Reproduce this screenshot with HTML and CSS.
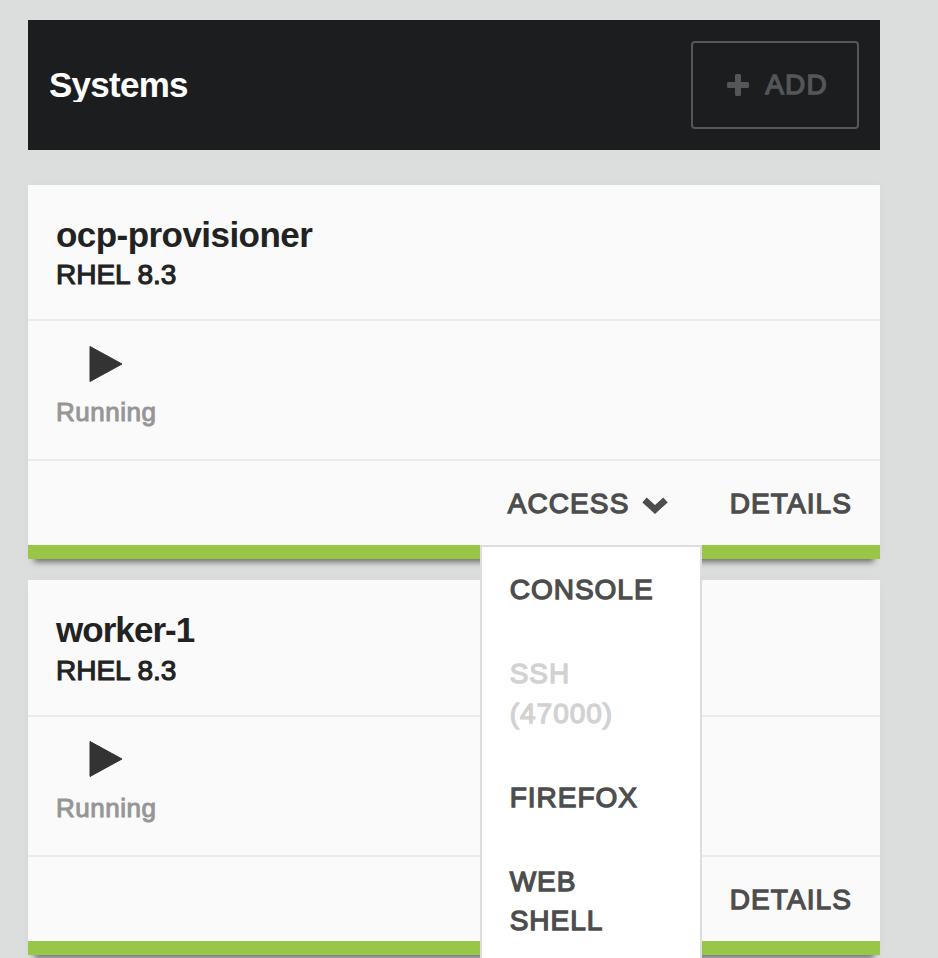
FILE: index.html
```html
<!DOCTYPE html>
<html lang="en">
<head>
<meta charset="utf-8">
<title>Systems</title>
<link rel="stylesheet" href="styles.css">
</head>
<body>
<main class="page">
  <header class="toolbar">
    <h1 class="toolbar-title">Systems</h1>
    <button class="add-button" disabled>
      <svg class="plus" viewBox="0 0 22 22"><path d="M9.500 0h3a1.500 1.500 0 0 1 1.500 1.500V8h6.500a1.500 1.500 0 0 1 1.500 1.500v3a1.500 1.500 0 0 1-1.500 1.500H14v6.500a1.500 1.500 0 0 1-1.500 1.500h-3A1.500 1.500 0 0 1 8 20.500V14H1.500A1.500 1.500 0 0 1 0 12.500v-3A1.500 1.500 0 0 1 1.500 8H8V1.500A1.500 1.500 0 0 1 9.500 0z"/></svg>
      <span>ADD</span>
    </button>
  </header>

  <section class="card">
    <div class="card-header">
      <h2 class="name">ocp-provisioner</h2>
      <p class="os">RHEL 8.3</p>
    </div>
    <div class="card-status">
      <svg class="play" viewBox="0 0 34 38"><path d="M1 1.500 33 19 1 36.500z"/></svg>
      <span class="state">Running</span>
    </div>
    <div class="card-actions">
      <div class="dropdown">
        <button class="action access">ACCESS
          <svg class="chevron" viewBox="0 0 26 18"><path d="M2.500 4 13 13.500 23.500 4"/></svg>
        </button>
        <ul class="menu">
          <li class="menu-item">CONSOLE</li>
          <li class="menu-item disabled">SSH (47000)</li>
          <li class="menu-item">FIREFOX</li>
          <li class="menu-item">WEB SHELL</li>
        </ul>
      </div>
      <button class="action">DETAILS</button>
    </div>
  </section>

  <section class="card card-second">
    <div class="card-header">
      <h2 class="name">worker-1</h2>
      <p class="os">RHEL 8.3</p>
    </div>
    <div class="card-status">
      <svg class="play" viewBox="0 0 34 38"><path d="M1 1.500 33 19 1 36.500z"/></svg>
      <span class="state">Running</span>
    </div>
    <div class="card-actions">
      <button class="action">DETAILS</button>
    </div>
  </section>
</main>
</body>
</html>
```
FILE: styles.css
```css
* { box-sizing: border-box; }
html, body { margin: 0; height: 100%; overflow: hidden; }
body {
  background: #dcdedd;
  font-family: "Liberation Sans", Arial, sans-serif;
  color: #222;
}
h1, h2, p, ul { margin: 0; padding: 0; font-weight: 400; }
button { font: inherit; background: none; border: 0; padding: 0; }

.page { height: 958px; overflow: hidden; padding: 20px 58px 0 28px; }

.toolbar {
  display: flex;
  align-items: center;
  justify-content: space-between;
  height: 130px;
  padding: 0 21px;
  margin-bottom: 35px;
  background: #1c1d1f;
}
.toolbar-title {
  height: 35px;
  margin-top: -1px;
  overflow: hidden;
  font-size: 35px;
  font-weight: 700;
  line-height: 36px;
  letter-spacing: -.75px;
  color: #fff;
}
.add-button {
  display: flex;
  align-items: center;
  justify-content: center;
  gap: 16px;
  width: 168px;
  height: 88px;
  padding-left: 5px;
  border: 2px solid #555658;
  border-radius: 4px;
  font-size: 28px;
  letter-spacing: 1.2px;
  color: #555658;
  -webkit-text-stroke: 1.3px #555658;
}
.plus { width: 22px; height: 22px; margin-top: -1px; fill: #555658; }

.card {
  margin-bottom: 21px;
  border-bottom: 14px solid #98c747;
  background: #fafafa;
  box-shadow: 0 9px 6px -6px rgba(0, 0, 0, .5), 0 0 12px rgba(0, 0, 0, .025);
}
.card-header { height: 136px; padding: 30px 28px 0; border-bottom: 2px solid #ebebeb; }
.card-second .card-header { height: 137px; }
.name {
  font-size: 35px;
  font-weight: 700;
  line-height: 40px;
  letter-spacing: -.55px;
}
.card-second .name { letter-spacing: -.95px; }
.os {
  padding-top: 1px;
  font-size: 28px;
  line-height: 38px;
  -webkit-text-stroke: 1.1px #222;
}
.card-second .os { padding-top: 2px; }
.card-status {
  display: flex;
  flex-direction: column;
  align-items: flex-start;
  height: 140px;
  padding: 24px 28px 0;
  border-bottom: 2px solid #ebebeb;
}
.play {
  width: 34px;
  height: 38px;
  margin-left: 33px;
  fill: #333;
  stroke: #333;
  stroke-width: 1;
  stroke-linejoin: round;
}
.card-second .card-status { padding-top: 23px; }
.card-second .state { margin-top: 13px; }
.state {
  margin-top: 12px;
  font-size: 26px;
  line-height: 34px;
  letter-spacing: .5px;
  color: #969696;
  -webkit-text-stroke: 1px #969696;
}
.card-actions {
  display: flex;
  justify-content: flex-end;
  height: 84px;
  padding-right: 28px;
}
.action {
  display: flex;
  align-items: center;
  height: 84px;
  padding-top: 2px;
  font-size: 28px;
  letter-spacing: 1.1px;
  color: #4d4d4d;
  -webkit-text-stroke: 1.3px #4d4d4d;
}
.dropdown { position: relative; width: 222px; }
.access { padding-left: 28px; gap: 13px; }
.chevron {
  width: 26px;
  height: 18px;
  margin-top: 1px;
  fill: none;
  stroke: #4d4d4d;
  stroke-width: 6.5;
}
.menu {
  position: absolute;
  z-index: 2;
  top: 84px;
  left: 0;
  width: 222px;
  padding-top: 1px;
  list-style: none;
  border: 2px solid #dcdedd;
  background: #fff;
}
.dropdown + .action { margin-left: 28px; }
.menu-item {
  padding: 22.4px 28px;
  font-size: 28px;
  line-height: 39.2px;
  letter-spacing: 1px;
  color: #4d4d4d;
  -webkit-text-stroke: 1.3px currentColor;
}
.menu-item.disabled { color: #d2d2d2; }
```
